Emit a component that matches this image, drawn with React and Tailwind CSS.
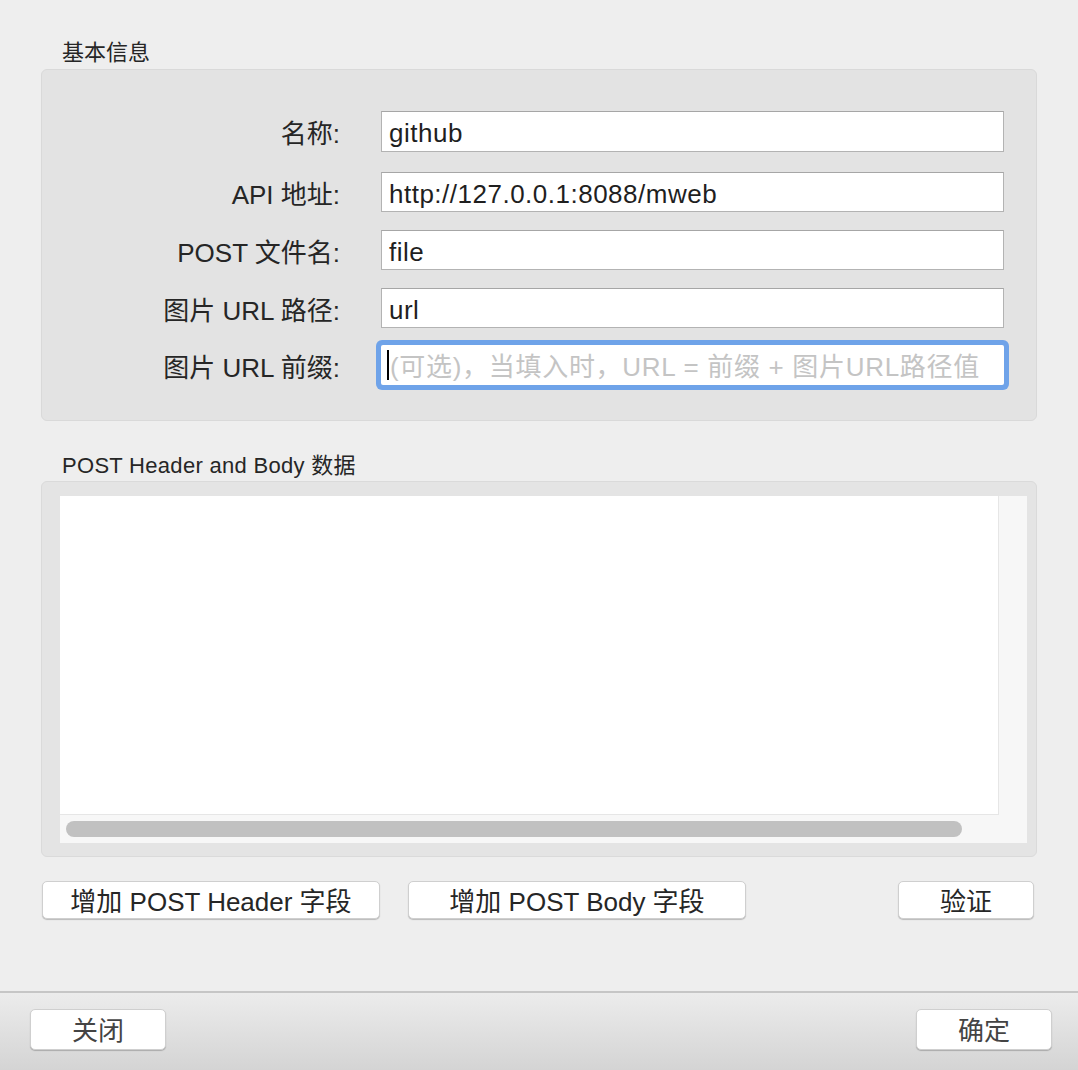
import React from 'react';

const font = { fontFamily: '"Liberation Sans", "Noto Sans CJK SC", sans-serif' };

const rows = [
  { label: '名称:', value: 'github', h: 'h-[41px]', mt: 'mt-[41px]' },
  { label: 'API 地址:', value: 'http://127.0.0.1:8088/mweb', h: 'h-[40px]', mt: 'mt-[20px]' },
  { label: 'POST 文件名:', value: 'file', h: 'h-[40px]', mt: 'mt-[18px]' },
  { label: '图片 URL 路径:', value: 'url', h: 'h-[40px]', mt: 'mt-[18px]' },
];

const Field = ({ label, value, h, mt }) => (
  <div className={`flex items-center ${mt}`}>
    <div className="w-[298px] pt-[5px] text-right text-[26px] text-[#262626] leading-none">{label}</div>
    <div
      className={`ml-[41px] w-[623px] ${h} bg-white border border-[#b3b3b3] border-t-[#a6a6a6] flex items-center pl-[7px] pt-[4px] text-[26px] text-[#1f1f1f] tracking-[0.5px]`}
    >
      {value}
    </div>
  </div>
);

const Button = ({ children, className = '' }) => (
  <button
    className={`bg-white rounded-[5px] border border-[#cfcfcf] shadow-[0_1px_1px_rgba(0,0,0,0.22)] text-[26px] text-[#262626] leading-none flex items-center justify-center pt-[3px] ${className}`}
  >
    {children}
  </button>
);

export default function App() {
  return (
    <div style={font} className="w-[1078px] h-[1070px] flex flex-col bg-[#eeeeee] overflow-hidden">
      <div className="flex-1 pl-[41px] pr-[41px]">
        {/* 基本信息 */}
        <div className="mt-[42px] pl-[21px] text-[22px] leading-[22px] text-[#262626]">基本信息</div>
        <div className="mt-[5px] w-[996px] h-[352px] bg-[#e3e3e3] border border-[#d9d9d9] rounded-[6px]">
          {rows.map((r) => (
            <Field key={r.label} {...r} />
          ))}
          <div className="flex items-center mt-[17px]">
            <div className="w-[298px] pt-[5px] text-right text-[26px] text-[#262626] leading-none">图片 URL 前缀:</div>
            <div className="ml-[41px] w-[623px] h-[40px] bg-white rounded-[2px] shadow-[0_0_0_5px_#6fa3e9] flex items-center pl-[6px] text-[26px] text-[#c4c4c4] tracking-[0.7px]">
              <span className="w-[2px] h-[30px] bg-black mr-[1px]" />
              <span className="pt-[4px]">(可选)，当填入时，URL = 前缀 + 图片URL路径值</span>
            </div>
          </div>
        </div>

        {/* POST Header and Body 数据 */}
        <div className="mt-[34px] pl-[21px] text-[22px] leading-[22px] text-[#262626] tracking-[0.3px]">POST Header and Body 数据</div>
        <div className="mt-[4px] w-[996px] h-[376px] bg-[#e4e4e4] border border-[#dadada] rounded-[6px] pt-[14px] pl-[18px] pr-[9px]">
          <div className="w-[967px] h-[347px] bg-[#f7f7f7] flex flex-col">
            <div className="flex h-[319px]">
              <div className="w-[939px] h-full bg-white border-r border-b border-[#e6e6e6]" />
            </div>
            <div className="flex-1 flex items-center pl-[6px]">
              <div className="w-[896px] h-[16px] rounded-full bg-[#c1c1c1]" />
            </div>
          </div>
        </div>

        <div className="mt-[24px] flex items-center">
          <Button className="ml-[1px] w-[338px] h-[38px]">增加 POST Header 字段</Button>
          <Button className="ml-[28px] w-[338px] h-[38px]">增加 POST Body 字段</Button>
          <Button className="ml-auto mr-[3px] w-[136px] h-[38px]">验证</Button>
        </div>
      </div>

      <div className="h-[79px] border-t-2 border-[#c6c6c6] bg-gradient-to-b from-[#ececec] to-[#d4d4d4] flex items-start justify-between pl-[30px] pr-[26px] pt-[16px]">
        <Button className="w-[136px] h-[41px] text-[#444444]">关闭</Button>
        <Button className="w-[136px] h-[41px] text-[#444444]">确定</Button>
      </div>
    </div>
  );
}
